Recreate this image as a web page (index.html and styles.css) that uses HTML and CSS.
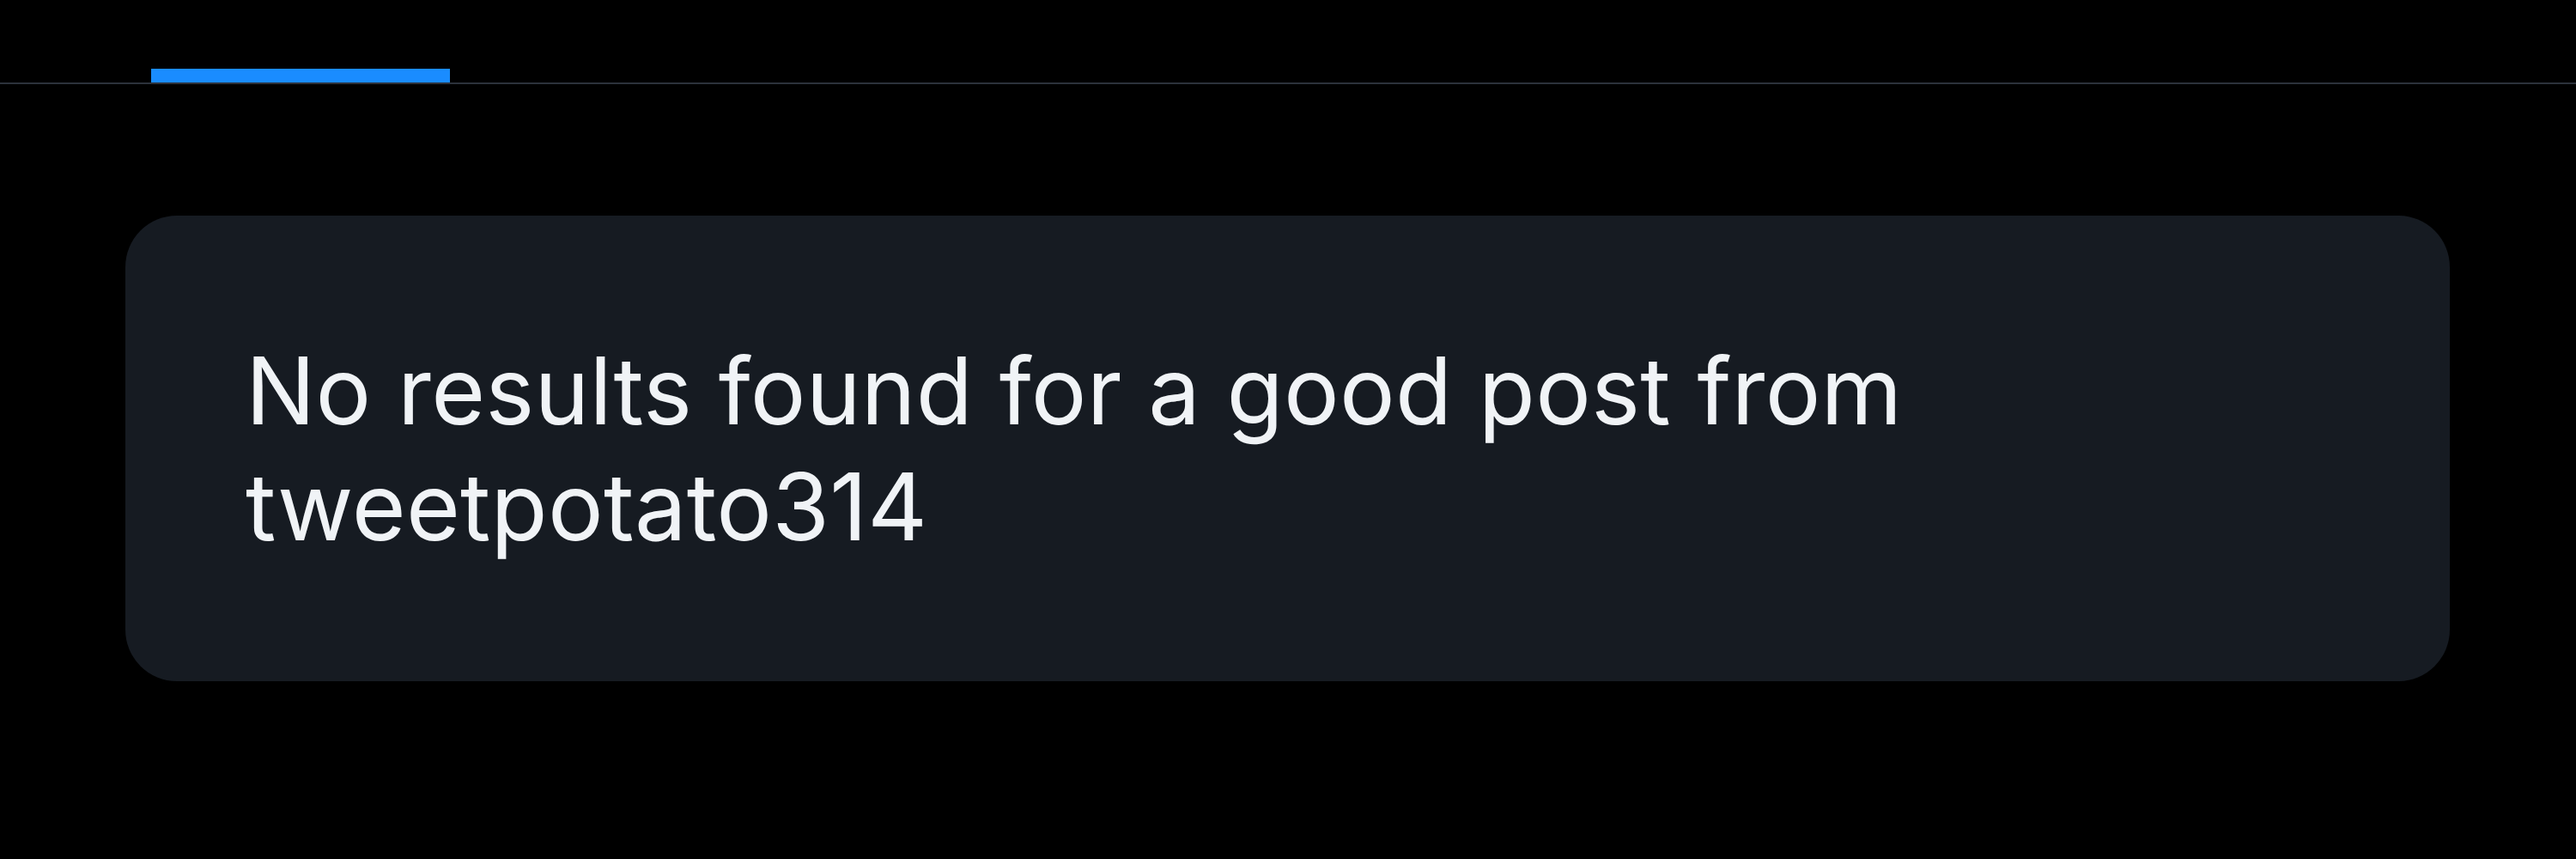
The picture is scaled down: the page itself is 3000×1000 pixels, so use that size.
FILE: index.html
```html
<!DOCTYPE html>
<html lang="en">
<head>
    <meta charset="UTF-8">
    <title>Search</title>
    <link rel="stylesheet" href="styles.css">
</head>
<body>

<div class="tabs">
  <div class="tab active"></div>
</div>

<div class="results">
  <div class="empty">
    No results found for a good post from tweetpotato314
  </div>
</div>

</body>
</html>
```

FILE: styles.css
```css
body{
  margin:0;
  background-color:#000;
  color:#f0f3f6;
  font-family:Inter, "Noto Sans", sans-serif;
}

/* tab strip with the active underline */
.tabs{
  display:flex;
  align-items:flex-end;
  height:96px;
  padding-left:176px;
  border-bottom:2px solid #2c323b;
}
.tab{
  width:348px;
  height:16px;
}
.tab.active{
  background-color:#1a8cff;
}

.results{
  padding:153px 147px 0 146px;
}
.empty{
  background-color:#161b22;
  border-radius:60px;
  padding:136px 140px 136px 140px;
  font-size:108px;
  line-height:135px;
  letter-spacing:0.2px;
}
```
